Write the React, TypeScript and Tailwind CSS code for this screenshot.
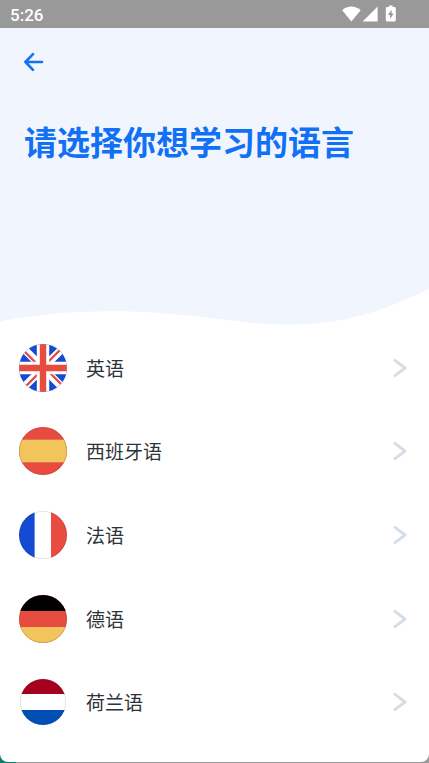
import type { ReactNode } from "react";

const flags: Record<string, ReactNode> = {
  en: (
    <>
      <rect width="48" height="48" fill="#144bd2" />
      <path d="M4 4L44 44M44 4L4 44" stroke="#fff" strokeWidth="7.6" />
      <path
        d="M5 7L18 20M41 6L28 19M7 42L20 29M43 41L30 28"
        stroke="#e84b3f"
        strokeWidth="2.4"
      />
      <path d="M24 0V48M0 24H48" stroke="#fff" strokeWidth="12.4" />
      <path d="M24 0V48M0 24H48" stroke="#e84b3f" strokeWidth="6.4" />
    </>
  ),
  es: (
    <>
      <rect width="48" height="48" fill="#e84b3f" />
      <rect y="12.7" width="48" height="22.6" fill="#f2c55c" />
    </>
  ),
  fr: (
    <>
      <rect width="48" height="48" fill="#fff" />
      <rect width="15.6" height="48" fill="#144bd2" />
      <rect x="32" width="16" height="48" fill="#e84b3f" />
    </>
  ),
  de: (
    <>
      <rect width="48" height="48" fill="#e84b3f" />
      <rect width="48" height="16" fill="#000" />
      <rect y="32" width="48" height="16" fill="#f2c55c" />
    </>
  ),
  nl: (
    <>
      <rect width="48" height="48" fill="#fff" />
      <rect width="48" height="16" fill="#a6001f" />
      <rect y="32" width="48" height="16" fill="#004fb4" />
    </>
  ),
};

const languages = [
  { code: "en", name: "英语" },
  { code: "es", name: "西班牙语" },
  { code: "fr", name: "法语" },
  { code: "de", name: "德语" },
  { code: "nl", name: "荷兰语" },
];

function Flag({ code }: { code: string }) {
  return (
    <svg viewBox="0 0 48 48" className="size-12 shrink-0" aria-hidden="true">
      <defs>
        <clipPath id={`flag-${code}`}>
          <circle cx="24" cy="24" r={code === "nl" ? 23 : 24} />
        </clipPath>
      </defs>
      <g clipPath={`url(#flag-${code})`}>{flags[code]}</g>
      {code !== "en" && (
        <circle
          cx="24"
          cy="24"
          r={code === "nl" ? 22.7 : 23.6}
          fill="none"
          stroke="#000"
          strokeOpacity="0.14"
          strokeWidth="0.8"
        />
      )}
    </svg>
  );
}

function StatusBar() {
  return (
    <div className="flex h-7 items-center justify-between bg-[#999999] pr-8 pl-[10px] text-white">
      <span className="pt-[2px] font-['Roboto',sans-serif] text-[17px] leading-5 font-medium">
        5:26
      </span>
      <svg width="56" height="18" viewBox="0 0 56 18" fill="currentColor" aria-hidden="true">
        <path d="M1.2 5.3C6.4 0.3 14.4 0.3 19.6 5.3L10.4 16.6Z" />
        <path d="M36.6 1.6V16.6H21.6Z" />
        <path
          fillRule="evenodd"
          d="M48 0.6H51.6V2.1H53.4Q54.8 2.1 54.8 3.5V15.2Q54.8 16.6 53.4 16.6H46.2Q44.8 16.6 44.8 15.2V3.5Q44.8 2.1 46.2 2.1H48ZM50.6 4.8L46.9 10.1H49.1V14L52.7 8.6H50.6Z"
        />
      </svg>
    </div>
  );
}

export default function App() {
  return (
    <div className="bg-[linear-gradient(to_right,#0c7f70_16px,#999999_16px)] pb-px font-['Noto_Sans_CJK_SC',sans-serif]">
      <div className="flex min-h-[calc(100vh-1px)] flex-col overflow-hidden rounded-b-lg bg-white">
        <StatusBar />

        <header className="bg-[#f1f6fe]">
          <div className="h-[258px] px-6 pt-6">
            <button type="button" aria-label="返回" className="block">
              <svg
                width="20"
                height="20"
                viewBox="0 0 20 20"
                fill="none"
                stroke="#1473f5"
                strokeWidth="2.6"
                strokeLinecap="round"
                strokeLinejoin="round"
              >
                <path d="M18 10H1.4M9 2.2L1.4 10L9 17.8" />
              </svg>
            </button>
            <h1 className="mt-[45px] text-[33px] leading-12 font-bold whitespace-nowrap text-[#1170f4]">
              请选择你想学习的语言
            </h1>
          </div>
        </header>

        <svg
          viewBox="0 0 429 40"
          preserveAspectRatio="none"
          className="block h-10 w-full shrink-0"
          aria-hidden="true"
        >
          <path
            d="M0 0V35.5C38 28 74 25.5 110 25.3C165 25.5 200 31 240 35.5C256 37.4 270 38.7 288 38.7C345 38.7 386 24 429 3V0Z"
            fill="#f1f6fe"
          />
        </svg>

        <ul className="grid flex-1 auto-rows-fr pb-[18px]">
          {languages.map(({ code, name }) => (
            <li key={code} className="flex">
              <button
                type="button"
                className="flex w-full items-center pr-[22px] pl-[19px] text-left"
              >
                <Flag code={code} />
                <span className="ml-[19px] flex-1 text-[19px] leading-7 text-[#2d3338]">
                  {name}
                </span>
                <svg
                  width="14"
                  height="20"
                  viewBox="0 0 14 20"
                  fill="none"
                  stroke="#d5dee6"
                  strokeWidth="3"
                  strokeLinecap="round"
                  strokeLinejoin="round"
                  aria-hidden="true"
                >
                  <path d="M2 2.4L12 10L2 17.6" />
                </svg>
              </button>
            </li>
          ))}
        </ul>
      </div>
    </div>
  );
}
